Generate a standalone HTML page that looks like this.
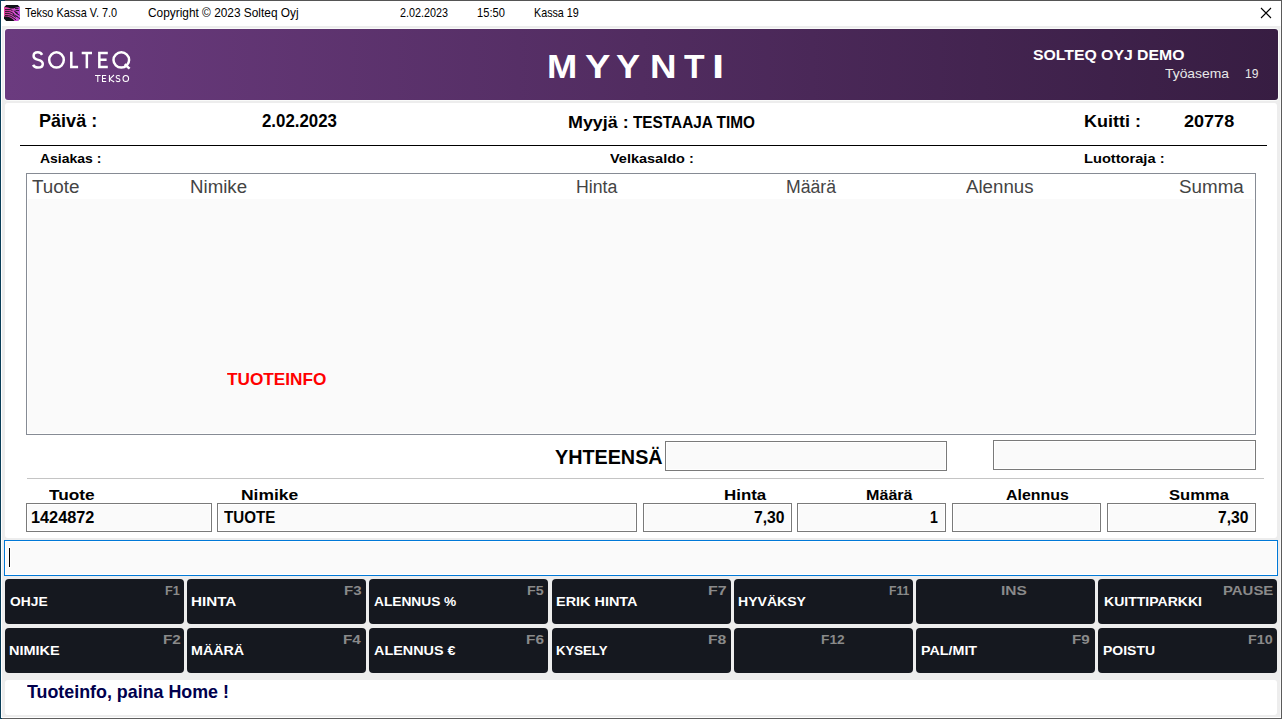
<!DOCTYPE html>
<html><head><meta charset="utf-8"><style>
html,body{margin:0;padding:0;}
body{width:1282px;height:719px;position:relative;overflow:hidden;background:#ededed;font-family:"Liberation Sans",sans-serif;}
.a{position:absolute;box-sizing:border-box;}
.t{position:absolute;white-space:pre;transform-origin:0 0;}
</style></head><body>
<div class="a" style="left:0px;top:0px;width:1282px;height:26px;background:#fff"></div>
<div class="a" style="left:0px;top:0px;width:1282px;height:1px;background:#555"></div>
<div class="a" style="left:0px;top:0px;width:5px;height:1px;background:#0a3a55"></div>
<div class="a" style="left:0px;top:0px;width:1px;height:719px;background:#0a3d58"></div>
<div class="a" style="left:1281px;top:0px;width:1px;height:719px;background:#5a5a5a"></div>
<div class="a" style="left:0px;top:718px;width:1282px;height:1px;background:#5e5e5e"></div>
<div class="a" style="left:0px;top:718px;width:2px;height:1px;background:#0a3d58"></div>
<div class="a" style="left:1px;top:26px;width:1px;height:692px;background:#fff"></div>
<div class="a" style="left:1280px;top:26px;width:1px;height:692px;background:#f8f8f8"></div>
<div class="a" style="left:1px;top:717px;width:1280px;height:1px;background:#fff"></div>
<svg class="a" style="left:4px;top:5px" width="16" height="16" viewBox="0 0 16 16">
<defs><linearGradient id="ig" x1="0" x2="1" y1="0" y2="0"><stop offset="0" stop-color="#e8409c"/><stop offset="1" stop-color="#c650e6"/></linearGradient>
<clipPath id="ic"><path d="M2.2 0H13.8L16 2.2V13.8L13.8 16H2.2L0 13.8V2.2Z"/></clipPath></defs>
<g clip-path="url(#ic)">
<rect width="16" height="16" fill="#111318"/>
<path d="M0 2C4 2.2 6 3.6 8 3.6C10 3.6 12 2.2 16 2V16H10.5C8 13 5 11.2 0 11.6Z" fill="url(#ig)"/>
<g stroke="#111318" stroke-width="0.9" fill="none">
<path d="M1 4.6H6.5L8.5 5.6"/><path d="M1 6.6H5.5L8 7.6L9.8 8.8"/><path d="M1 8.6H5L7.5 9.6L10 11L12 12.4"/><path d="M1 10.6H4.5L7 11.4L9.5 13L12 14.8"/>
<path d="M11 3.6H14.5"/><path d="M11.5 5.6H15"/><path d="M11 7.2L13 8.8L15.5 10.2"/><path d="M9.8 5.8L11.8 7L14 8.4"/>
<path d="M12.6 11L14.4 12.6L16 13.6"/><path d="M9 9L11 10.4L13.5 12"/>
</g></g></svg>
<svg class="a" style="left:1258px;top:5px" width="16" height="16" viewBox="0 0 16 16"><path d="M3 3L13 13M13 3L3 13" stroke="#000" stroke-width="1.1" fill="none"/></svg>
<div class="a" style="left:4px;top:28px;width:1275px;height:73px;background:#f9faf9;border-radius:4px"></div>
<div class="a" style="left:5px;top:29px;width:1272.6px;height:71px;background:linear-gradient(90deg,#6b3b7f 0%,#512c60 50%,#371d42 100%);border-radius:3px"></div>
<svg class="a" style="left:0;top:0" width="160" height="100" viewBox="0 0 160 100"><g fill="none" stroke="#fff" stroke-width="2.5" stroke-linecap="butt">
<path d="M42.1 54.9C41.2 53.2 39.6 52.3 37.9 52.3C35.4 52.3 33.6 53.7 33.6 55.9C33.6 58.5 36 59.3 38.3 59.9C41 60.6 42.8 61.6 42.8 64C42.8 66.3 40.8 67.6 38 67.6C35.8 67.6 34 66.7 33.1 64.9"/>
<ellipse cx="56.5" cy="59.9" rx="7.3" ry="7.6"/>
<path d="M71.3 51.7V67.1H78.1"/>
<path d="M81.7 53H92M86.85 53V68.3"/>
<path d="M107.8 53H99.35V67.05H107.8M99.35 59.8H106.6"/>
<ellipse cx="121.3" cy="59.9" rx="7.8" ry="7.6"/>
<path d="M124.6 64.3L129.6 68.6"/>
</g><g fill="none" stroke="#fff" stroke-width="1.05">
<path d="M95 75.5H100.6M97.8 75.5V82"/>
<path d="M106.2 75.5H102.5V81.5H106.2M102.5 78.5H105.8"/>
<path d="M109.4 75V82M114 75L109.6 79.2L114.2 82"/>
<path d="M119.9 76.3C119.5 75.6 118.8 75.4 118 75.4C116.8 75.4 116.1 76 116.1 76.9C116.1 78.1 117.3 78.3 118.2 78.6C119.3 78.9 120 79.3 120 80.2C120 81.1 119.2 81.6 118 81.6C117.1 81.6 116.3 81.2 115.9 80.5"/>
<ellipse cx="125.8" cy="78.5" rx="2.8" ry="3.05"/>
</g></svg>
<div class="a" style="left:5px;top:103px;width:1272px;height:435px;background:#fff;border-radius:3px"></div>
<div class="a" style="left:20px;top:145px;width:1247px;height:1px;background:#000"></div>
<div class="a" style="left:26px;top:173px;width:1230px;height:262px;background:#fff;border:1px solid #868b94"></div>
<div class="a" style="left:28px;top:199px;width:1226px;height:234px;background:#fafafa"></div>
<div class="a" style="left:665px;top:441px;width:282px;height:30px;background:#fafafa;border:1px solid #7a7a7a;box-shadow:inset 0 0 0 1px #fff"></div>
<div class="a" style="left:993px;top:440px;width:263px;height:30px;background:#fafafa;border:1px solid #7a7a7a;box-shadow:inset 0 0 0 1px #fff"></div>
<div class="a" style="left:27px;top:478px;width:1237px;height:1px;background:#c4c4c4"></div>
<div class="a" style="left:26px;top:503px;width:186px;height:29px;background:#fafafa;border:1px solid #7a7a7a;box-shadow:inset 0 0 0 1px #fff"></div>
<div class="a" style="left:217px;top:503px;width:420px;height:29px;background:#fafafa;border:1px solid #7a7a7a;box-shadow:inset 0 0 0 1px #fff"></div>
<div class="a" style="left:643px;top:503px;width:149px;height:29px;background:#fafafa;border:1px solid #7a7a7a;box-shadow:inset 0 0 0 1px #fff"></div>
<div class="a" style="left:797px;top:503px;width:149px;height:29px;background:#fafafa;border:1px solid #7a7a7a;box-shadow:inset 0 0 0 1px #fff"></div>
<div class="a" style="left:952px;top:503px;width:149px;height:29px;background:#fafafa;border:1px solid #7a7a7a;box-shadow:inset 0 0 0 1px #fff"></div>
<div class="a" style="left:1107px;top:503px;width:149px;height:29px;background:#fafafa;border:1px solid #7a7a7a;box-shadow:inset 0 0 0 1px #fff"></div>
<div class="a" style="left:4px;top:540px;width:1274px;height:36px;background:#fafafa;border:1px solid #0078d7;box-shadow:inset 0 0 0 1px #fff"></div>
<div class="a" style="left:8px;top:547px;width:3px;height:21px;background:#fff"></div>
<div class="a" style="left:9px;top:548px;width:1px;height:19px;background:#000"></div>
<div class="a" style="left:5px;top:579px;width:179px;height:45px;background:#15181f;border-radius:4px"></div>
<div class="a" style="left:187px;top:579px;width:179px;height:45px;background:#15181f;border-radius:4px"></div>
<div class="a" style="left:369px;top:579px;width:179px;height:45px;background:#15181f;border-radius:4px"></div>
<div class="a" style="left:552px;top:579px;width:179px;height:45px;background:#15181f;border-radius:4px"></div>
<div class="a" style="left:734px;top:579px;width:179px;height:45px;background:#15181f;border-radius:4px"></div>
<div class="a" style="left:916px;top:579px;width:179px;height:45px;background:#15181f;border-radius:4px"></div>
<div class="a" style="left:1098px;top:579px;width:179px;height:45px;background:#15181f;border-radius:4px"></div>
<div class="a" style="left:5px;top:628px;width:179px;height:45px;background:#15181f;border-radius:4px"></div>
<div class="a" style="left:187px;top:628px;width:179px;height:45px;background:#15181f;border-radius:4px"></div>
<div class="a" style="left:369px;top:628px;width:179px;height:45px;background:#15181f;border-radius:4px"></div>
<div class="a" style="left:552px;top:628px;width:179px;height:45px;background:#15181f;border-radius:4px"></div>
<div class="a" style="left:734px;top:628px;width:179px;height:45px;background:#15181f;border-radius:4px"></div>
<div class="a" style="left:916px;top:628px;width:179px;height:45px;background:#15181f;border-radius:4px"></div>
<div class="a" style="left:1098px;top:628px;width:179px;height:45px;background:#15181f;border-radius:4px"></div>
<div class="a" style="left:5px;top:680px;width:1272px;height:35px;background:#fff;border-radius:3px"></div>
<div class="t" style="left:25.33px;top:6.60px;font-size:12.80px;line-height:12.80px;font-weight:normal;color:#000;transform:scaleX(0.8501)">Tekso Kassa V. 7.0</div>
<div class="t" style="left:147.54px;top:6.60px;font-size:12.80px;line-height:12.80px;font-weight:normal;color:#000;transform:scaleX(0.9276)">Copyright © 2023 Solteq Oyj</div>
<div class="t" style="left:399.59px;top:6.60px;font-size:12.80px;line-height:12.80px;font-weight:normal;color:#000;transform:scaleX(0.8438)">2.02.2023</div>
<div class="t" style="left:477.21px;top:6.60px;font-size:12.80px;line-height:12.80px;font-weight:normal;color:#000;transform:scaleX(0.8704)">15:50</div>
<div class="t" style="left:534.36px;top:6.60px;font-size:12.80px;line-height:12.80px;font-weight:normal;color:#000;transform:scaleX(0.8391)">Kassa 19</div>
<div class="t" style="left:546.92px;top:49.97px;font-size:33.07px;line-height:33.07px;font-weight:bold;color:#fff;transform:scaleX(1.0985)">M</div>
<div class="t" style="left:584.52px;top:49.97px;font-size:33.07px;line-height:33.07px;font-weight:bold;color:#fff;transform:scaleX(1.1529)">Y</div>
<div class="t" style="left:616.14px;top:49.97px;font-size:33.07px;line-height:33.07px;font-weight:bold;color:#fff;transform:scaleX(1.0957)">Y</div>
<div class="t" style="left:649.57px;top:49.97px;font-size:33.07px;line-height:33.07px;font-weight:bold;color:#fff;transform:scaleX(1.1109)">N</div>
<div class="t" style="left:684.30px;top:49.97px;font-size:33.07px;line-height:33.07px;font-weight:bold;color:#fff;transform:scaleX(1.0180)">T</div>
<div class="t" style="left:712.46px;top:49.97px;font-size:33.07px;line-height:33.07px;font-weight:bold;color:#fff;transform:scaleX(1.3249)">I</div>
<div class="t" style="left:1033.05px;top:47.59px;font-size:14.22px;line-height:14.22px;font-weight:bold;color:#fff;transform:scaleX(1.1103)">SOLTEQ OYJ DEMO</div>
<div class="t" style="left:1164.68px;top:68.21px;font-size:12.37px;line-height:12.37px;font-weight:normal;color:#e8e8e8;transform:scaleX(1.1218)">Työasema</div>
<div class="t" style="left:1245.23px;top:68.21px;font-size:12.37px;line-height:12.37px;font-weight:normal;color:#e8e8e8;transform:scaleX(0.9787)">19</div>
<div class="t" style="left:39.37px;top:113.15px;font-size:17.49px;line-height:17.49px;font-weight:bold;color:#000;transform:scaleX(1.0325)">Päivä :</div>
<div class="t" style="left:261.97px;top:113.15px;font-size:17.49px;line-height:17.49px;font-weight:bold;color:#000;transform:scaleX(0.9631)">2.02.2023</div>
<div class="t" style="left:567.88px;top:113.55px;font-size:16.50px;line-height:16.50px;font-weight:bold;color:#000;transform:scaleX(1.0835)">Myyjä :</div>
<div class="t" style="left:632.50px;top:113.96px;font-size:16.07px;line-height:16.07px;font-weight:bold;color:#000;transform:scaleX(0.9552)">TESTAAJA TIMO</div>
<div class="t" style="left:1084.17px;top:113.51px;font-size:16.78px;line-height:16.78px;font-weight:bold;color:#000;transform:scaleX(1.0715)">Kuitti :</div>
<div class="t" style="left:1184.03px;top:113.51px;font-size:16.78px;line-height:16.78px;font-weight:bold;color:#000;transform:scaleX(1.0762)">20778</div>
<div class="t" style="left:40.28px;top:151.92px;font-size:13.16px;line-height:13.16px;font-weight:bold;color:#000;transform:scaleX(1.0624)">Asiakas :</div>
<div class="t" style="left:609.60px;top:153.21px;font-size:12.37px;line-height:12.37px;font-weight:bold;color:#000;transform:scaleX(1.1717)">Velkasaldo :</div>
<div class="t" style="left:1084.38px;top:152.60px;font-size:12.80px;line-height:12.80px;font-weight:bold;color:#000;transform:scaleX(1.1440)">Luottoraja :</div>
<div class="t" style="left:31.60px;top:176.80px;font-size:19.20px;line-height:19.20px;font-weight:normal;color:#444;transform:scaleX(0.9831)">Tuote</div>
<div class="t" style="left:190.43px;top:176.80px;font-size:19.20px;line-height:19.20px;font-weight:normal;color:#444;transform:scaleX(0.9737)">Nimike</div>
<div class="t" style="left:575.59px;top:176.80px;font-size:19.20px;line-height:19.20px;font-weight:normal;color:#444;transform:scaleX(0.9232)">Hinta</div>
<div class="t" style="left:785.80px;top:176.80px;font-size:19.20px;line-height:19.20px;font-weight:normal;color:#444;transform:scaleX(0.9202)">Määrä</div>
<div class="t" style="left:966.20px;top:176.80px;font-size:19.20px;line-height:19.20px;font-weight:normal;color:#444;transform:scaleX(0.9741)">Alennus</div>
<div class="t" style="left:1178.51px;top:176.80px;font-size:19.20px;line-height:19.20px;font-weight:normal;color:#444;transform:scaleX(0.9791)">Summa</div>
<div class="t" style="left:227.00px;top:370.72px;font-size:17.35px;line-height:17.35px;font-weight:bold;color:#ff0000;transform:scaleX(0.9924)">TUOTEINFO</div>
<div class="t" style="left:554.59px;top:447.59px;font-size:19.63px;line-height:19.63px;font-weight:bold;color:#000;transform:scaleX(1.0076)">YHTEENSÄ</div>
<div class="t" style="left:49.40px;top:488.22px;font-size:14.36px;line-height:14.36px;font-weight:bold;color:#000;transform:scaleX(1.2025)">Tuote</div>
<div class="t" style="left:240.60px;top:488.22px;font-size:14.36px;line-height:14.36px;font-weight:bold;color:#000;transform:scaleX(1.2171)">Nimike</div>
<div class="t" style="left:723.84px;top:488.22px;font-size:14.36px;line-height:14.36px;font-weight:bold;color:#000;transform:scaleX(1.1767)">Hinta</div>
<div class="t" style="left:865.59px;top:488.22px;font-size:14.36px;line-height:14.36px;font-weight:bold;color:#000;transform:scaleX(1.1224)">Määrä</div>
<div class="t" style="left:1006.45px;top:488.22px;font-size:14.36px;line-height:14.36px;font-weight:bold;color:#000;transform:scaleX(1.1083)">Alennus</div>
<div class="t" style="left:1168.74px;top:488.22px;font-size:14.36px;line-height:14.36px;font-weight:bold;color:#000;transform:scaleX(1.1556)">Summa</div>
<div class="t" style="left:30.58px;top:509.68px;font-size:16.64px;line-height:16.64px;font-weight:bold;color:#000;transform:scaleX(0.9791)">1424872</div>
<div class="t" style="left:224.40px;top:509.68px;font-size:16.64px;line-height:16.64px;font-weight:bold;color:#000;transform:scaleX(0.9115)">TUOTE</div>
<div class="t" style="left:753.69px;top:509.68px;font-size:16.64px;line-height:16.64px;font-weight:bold;color:#000;transform:scaleX(0.9434)">7,30</div>
<div class="t" style="left:929.51px;top:509.68px;font-size:16.64px;line-height:16.64px;font-weight:bold;color:#000;transform:scaleX(0.8500)">1</div>
<div class="t" style="left:1217.50px;top:509.68px;font-size:16.64px;line-height:16.64px;font-weight:bold;color:#000;transform:scaleX(0.9401)">7,30</div>
<div class="t" style="left:9.86px;top:595.26px;font-size:13.08px;line-height:13.08px;font-weight:bold;color:#fff;transform:scaleX(1.0555)">OHJE</div>
<div class="t" style="left:191.15px;top:595.26px;font-size:13.08px;line-height:13.08px;font-weight:bold;color:#fff;transform:scaleX(1.1626)">HINTA</div>
<div class="t" style="left:373.78px;top:595.26px;font-size:13.08px;line-height:13.08px;font-weight:bold;color:#fff;transform:scaleX(1.0484)">ALENNUS %</div>
<div class="t" style="left:556.19px;top:595.26px;font-size:13.08px;line-height:13.08px;font-weight:bold;color:#fff;transform:scaleX(1.1039)">ERIK HINTA</div>
<div class="t" style="left:738.12px;top:595.26px;font-size:13.08px;line-height:13.08px;font-weight:bold;color:#fff;transform:scaleX(1.0755)">HYVÄKSY</div>
<div class="t" style="left:1104.32px;top:595.26px;font-size:13.08px;line-height:13.08px;font-weight:bold;color:#fff;transform:scaleX(1.0730)">KUITTIPARKKI</div>
<div class="t" style="left:9.39px;top:643.96px;font-size:13.08px;line-height:13.08px;font-weight:bold;color:#fff;transform:scaleX(1.1092)">NIMIKE</div>
<div class="t" style="left:191.21px;top:643.96px;font-size:13.08px;line-height:13.08px;font-weight:bold;color:#fff;transform:scaleX(1.0918)">MÄÄRÄ</div>
<div class="t" style="left:373.77px;top:643.96px;font-size:13.08px;line-height:13.08px;font-weight:bold;color:#fff;transform:scaleX(1.0999)">ALENNUS €</div>
<div class="t" style="left:556.28px;top:643.96px;font-size:13.08px;line-height:13.08px;font-weight:bold;color:#fff;transform:scaleX(1.0063)">KYSELY</div>
<div class="t" style="left:920.60px;top:643.96px;font-size:13.08px;line-height:13.08px;font-weight:bold;color:#fff;transform:scaleX(1.0927)">PAL/MIT</div>
<div class="t" style="left:1102.53px;top:643.96px;font-size:13.08px;line-height:13.08px;font-weight:bold;color:#fff;transform:scaleX(1.0693)">POISTU</div>
<div class="t" style="left:164.80px;top:583.89px;font-size:13.23px;line-height:13.23px;font-weight:bold;color:#8a8a8a;transform:scaleX(0.9596)">F1</div>
<div class="t" style="left:344.15px;top:583.89px;font-size:13.23px;line-height:13.23px;font-weight:bold;color:#8a8a8a;transform:scaleX(1.1357)">F3</div>
<div class="t" style="left:526.79px;top:583.89px;font-size:13.23px;line-height:13.23px;font-weight:bold;color:#8a8a8a;transform:scaleX(1.0790)">F5</div>
<div class="t" style="left:708.30px;top:583.89px;font-size:13.23px;line-height:13.23px;font-weight:bold;color:#8a8a8a;transform:scaleX(1.2080)">F7</div>
<div class="t" style="left:888.52px;top:583.89px;font-size:13.23px;line-height:13.23px;font-weight:bold;color:#8a8a8a;transform:scaleX(0.9238)">F11</div>
<div class="t" style="left:1000.53px;top:583.89px;font-size:13.23px;line-height:13.23px;font-weight:bold;color:#8a8a8a;transform:scaleX(1.1742)">INS</div>
<div class="t" style="left:1222.67px;top:583.89px;font-size:13.23px;line-height:13.23px;font-weight:bold;color:#8a8a8a;transform:scaleX(1.1287)">PAUSE</div>
<div class="t" style="left:162.54px;top:632.87px;font-size:13.65px;line-height:13.65px;font-weight:bold;color:#8a8a8a;transform:scaleX(1.1204)">F2</div>
<div class="t" style="left:343.34px;top:632.87px;font-size:13.65px;line-height:13.65px;font-weight:bold;color:#8a8a8a;transform:scaleX(1.1209)">F4</div>
<div class="t" style="left:526.03px;top:632.87px;font-size:13.65px;line-height:13.65px;font-weight:bold;color:#8a8a8a;transform:scaleX(1.1270)">F6</div>
<div class="t" style="left:708.32px;top:632.87px;font-size:13.65px;line-height:13.65px;font-weight:bold;color:#8a8a8a;transform:scaleX(1.1533)">F8</div>
<div class="t" style="left:820.54px;top:632.87px;font-size:13.65px;line-height:13.65px;font-weight:bold;color:#8a8a8a;transform:scaleX(1.0080)">F12</div>
<div class="t" style="left:1072.33px;top:632.87px;font-size:13.65px;line-height:13.65px;font-weight:bold;color:#8a8a8a;transform:scaleX(1.1131)">F9</div>
<div class="t" style="left:1248.39px;top:632.87px;font-size:13.65px;line-height:13.65px;font-weight:bold;color:#8a8a8a;transform:scaleX(1.0538)">F10</div>
<div class="t" style="left:27.10px;top:684.45px;font-size:17.49px;line-height:17.49px;font-weight:bold;color:#00004d;transform:scaleX(1.0205)">Tuoteinfo, paina Home !</div>
</body></html>
